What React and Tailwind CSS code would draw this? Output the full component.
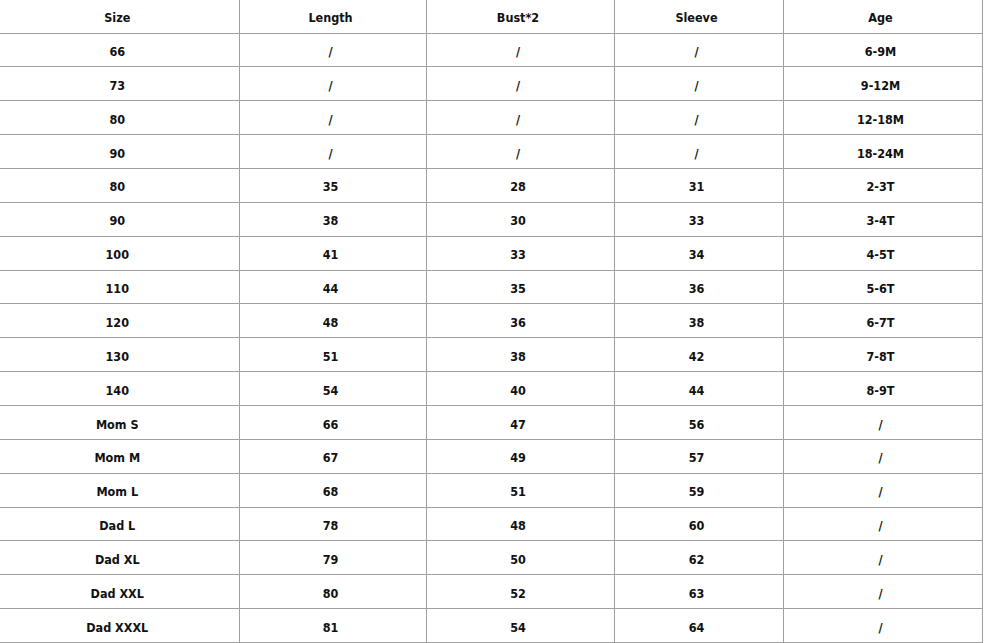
import React from "react";

const columns = [
  { key: "size", title: "Size", width: 239 },
  { key: "length", title: "Length", width: 187 },
  { key: "bust", title: "Bust*2", width: 188 },
  { key: "sleeve", title: "Sleeve", width: 169 },
  { key: "age", title: "Age", width: 199 },
];

const rows = [
  ["66", "/", "/", "/", "6-9M"],
  ["73", "/", "/", "/", "9-12M"],
  ["80", "/", "/", "/", "12-18M"],
  ["90", "/", "/", "/", "18-24M"],
  ["80", "35", "28", "31", "2-3T"],
  ["90", "38", "30", "33", "3-4T"],
  ["100", "41", "33", "34", "4-5T"],
  ["110", "44", "35", "36", "5-6T"],
  ["120", "48", "36", "38", "6-7T"],
  ["130", "51", "38", "42", "7-8T"],
  ["140", "54", "40", "44", "8-9T"],
  ["Mom S", "66", "47", "56", "/"],
  ["Mom M", "67", "49", "57", "/"],
  ["Mom L", "68", "51", "59", "/"],
  ["Dad L", "78", "48", "60", "/"],
  ["Dad XL", "79", "50", "62", "/"],
  ["Dad XXL", "80", "52", "63", "/"],
  ["Dad XXXL", "81", "54", "64", "/"],
];

const App = () => {
  return (
    <div className="w-[984px] h-[643px] bg-white overflow-hidden">
      <table
        className="table-fixed border-collapse w-[982px] h-[643px] text-[12.5px] font-bold text-[#111]"
        style={{ fontFamily: '"DejaVu Sans Condensed", "DejaVu Sans", Verdana, sans-serif', fontStretch: "condensed" }}
      >
        <colgroup>
          {columns.map((col) => (
            <col key={col.key} style={{ width: col.width }} />
          ))}
        </colgroup>
        <thead>
          <tr className="h-[33px]">
            {columns.map((col) => (
              <th key={col.key} className="border-b border-r border-[#a0a0a0] pt-[5px] pr-[4px] pb-0 pl-0 text-center font-bold">
                {col.title}
              </th>
            ))}
          </tr>
        </thead>
        <tbody>
          {rows.map((row, idx) => (
            <tr key={idx} className="h-[33px]">
              {row.map((cell, i) => (
                <td key={i} className="border-b border-r border-[#a0a0a0] pt-[5px] pr-[4px] pb-0 pl-0 text-center">
                  {cell}
                </td>
              ))}
            </tr>
          ))}
        </tbody>
      </table>
    </div>
  );
};

export default App;
